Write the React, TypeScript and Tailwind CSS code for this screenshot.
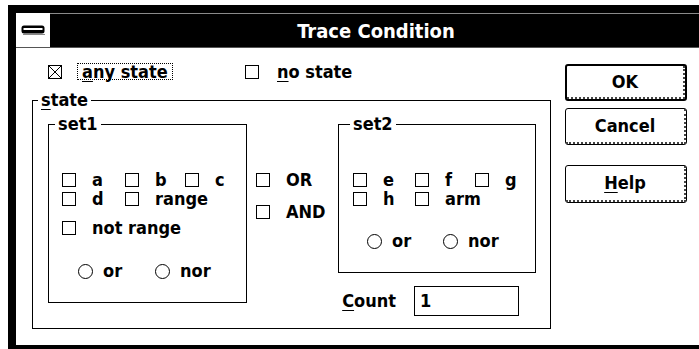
import React from "react";

const Box = ({ checked = false }: { checked?: boolean }) => (
  <span className="relative block w-[14px] h-[14px] border border-black bg-white shrink-0">
    {checked && (
      <svg className="absolute inset-0" width="12" height="12" viewBox="0 0 12 12">
        <path d="M0 0L12 12M12 0L0 12" stroke="black" strokeWidth="1" />
      </svg>
    )}
  </span>
);

const Radio = () => (
  <span className="block w-[15px] h-[15px] rounded-full border border-black bg-white shrink-0" />
);

const Check = ({ label, className = "" }: { label: React.ReactNode; className?: string }) => (
  <div className={`flex items-center h-4 ${className}`}>
    <Box />
    <span className="ml-[16px] leading-4">{label}</span>
  </div>
);

const Opt = ({ label, className = "" }: { label: string; className?: string }) => (
  <div className={`flex items-center h-4 ${className}`}>
    <Radio />
    <span className="ml-[10px] leading-4">{label}</span>
  </div>
);

const U = ({ children }: { children: React.ReactNode }) => (
  <span className="underline decoration-1 underline-offset-[3px]">{children}</span>
);

const Btn = ({ children, def = false, className = "" }: { children: React.ReactNode; def?: boolean; className?: string }) => (
  <div
    className={`flex w-[122px] bg-white border-black rounded-[3px] ${def ? "border-2" : "border"} ${className}`}
  >
    <div className="flex-1 flex items-center justify-center border-r-2 border-b-2 border-dotted border-[#444]">
      <span className="leading-4">{children}</span>
    </div>
  </div>
);

export default function App() {
  return (
    <div className="w-[699px] h-[349px] bg-white overflow-hidden pl-2 pt-[5px] font-['DejaVu_Sans_Condensed','DejaVu_Sans',sans-serif] font-bold text-[18px] text-black">
      <div className="w-[702px] h-[348px] border-[8px] border-black flex flex-col">
        {/* title bar */}
        <div className="h-[34px] flex shrink-0">
          <div className="w-[34px] bg-white flex items-center justify-center">
            <svg width="25" height="10" viewBox="0 0 25 10">
              <rect x="0.5" y="0.5" width="23" height="8" rx="2.5" fill="black" />
              <rect x="2.5" y="3" width="19" height="2" fill="white" />
              <rect x="2" y="9" width="22" height="1" fill="#888" />
            </svg>
          </div>
          <div className="flex-1 bg-black border-t border-[#8a8a8a] flex items-center justify-center">
            <span className="text-white text-[20px] leading-5">Trace Condition</span>
          </div>
        </div>
        <div className="h-px bg-[#555] shrink-0" />
        {/* client */}
        <div className="flex-1 flex bg-white">
          <div className="w-[535px] pl-4 flex flex-col shrink-0">
            <div className="mt-[15px] h-[17px] flex items-center pl-4">
              <div className="w-[197px] flex items-center">
                <Box checked />
                <span className="ml-[15px] border border-dotted border-black px-[4px] leading-[15px]">
                  <U>a</U>ny state
                </span>
              </div>
              <Box />
              <span className="ml-[18px] leading-4">
                <U>n</U>o state
              </span>
            </div>

            <fieldset className="mt-[12px] w-[519px] h-[237px] border border-black min-w-0">
              <legend className="ml-[5px] px-[3px] leading-4">
                <U>s</U>tate
              </legend>
              <div className="flex">
                {/* set1 */}
                <fieldset className="mt-2 ml-[15px] w-[199px] h-[187px] border border-black min-w-0 shrink-0">
                  <legend className="ml-[6px] px-[3px] leading-4">set1</legend>
                  <div className="flex flex-col pl-[13px]">
                    <div className="mt-[40px] flex">
                      <Check label="a" className="w-[63px]" />
                      <Check label="b" className="w-[60px]" />
                      <Check label="c" />
                    </div>
                    <div className="mt-[3px] flex">
                      <Check label="d" className="w-[63px]" />
                      <Check label="range" />
                    </div>
                    <Check label="not range" className="mt-[13px]" />
                    <div className="mt-[27px] flex pl-[16px]">
                      <Opt label="or" className="w-[77px]" />
                      <Opt label="nor" />
                    </div>
                  </div>
                </fieldset>

                {/* OR / AND */}
                <div className="ml-[9px] w-[82px] shrink-0 flex flex-col">
                  <Check label="OR" className="mt-[64px]" />
                  <Check label="AND" className="mt-[16px]" />
                </div>

                {/* set2 + count */}
                <div className="w-[198px] shrink-0 flex flex-col">
                  <fieldset className="mt-2 w-[198px] h-[157px] border border-black min-w-0">
                    <legend className="ml-[11px] px-[3px] leading-4">set2</legend>
                    <div className="flex flex-col pl-[14px]">
                      <div className="mt-[40px] flex">
                        <Check label="e" className="w-[62px]" />
                        <Check label="f" className="w-[60px]" />
                        <Check label="g" />
                      </div>
                      <div className="mt-[3px] flex">
                        <Check label="h" className="w-[62px]" />
                        <Check label="arm" />
                      </div>
                      <div className="mt-[26px] flex pl-[14px]">
                        <Opt label="or" className="w-[76px]" />
                        <Opt label="nor" />
                      </div>
                    </div>
                  </fieldset>
                  <div className="mt-[13px] flex items-center justify-end pr-[17px] gap-[18px]">
                    <span className="leading-4">
                      <U>C</U>ount
                    </span>
                    <div className="w-[105px] h-[30px] border border-black flex items-center pl-[5px]">
                      <span className="leading-4">1</span>
                    </div>
                  </div>
                </div>
              </div>
            </fieldset>
          </div>

          {/* buttons */}
          <div className="ml-[14px] flex flex-col">
            <Btn def className="mt-4 h-[37px]">OK</Btn>
            <Btn className="mt-[7px] h-[37px]">Cancel</Btn>
            <Btn className="mt-[20px] h-[38px]">
              <U>H</U>elp
            </Btn>
          </div>
        </div>
      </div>
    </div>
  );
}
